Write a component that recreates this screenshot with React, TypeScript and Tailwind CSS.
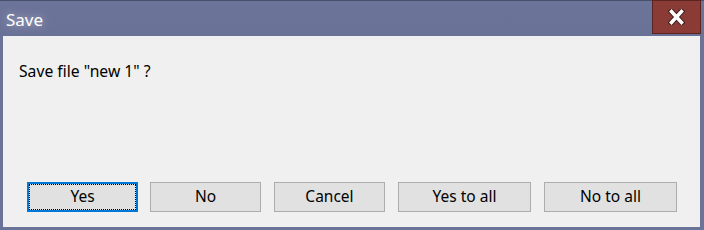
import React from "react";

const font = { fontFamily: '"Noto Sans", "Open Sans", sans-serif' };

function Btn({ label, w, focused }: { label: string; w: string; focused?: boolean }) {
  if (focused) {
    return (
      <div className={`${w} h-[30px] border-2 border-[#0078d7] bg-[#e1e1e1] flex`}>
        <div className="flex-1 border border-dotted border-black flex items-center justify-center text-[15.5px] text-black leading-none">
          {label}
        </div>
      </div>
    );
  }
  return (
    <div className={`${w} h-[30px] border border-[#adadad] bg-[#e1e1e1] flex items-center justify-center text-[15.5px] text-black leading-none`}>
      {label}
    </div>
  );
}

export default function App() {
  return (
    <div className="w-[704px] h-[230px] bg-[#6c7399] border-t border-[#4a4f6a] flex flex-col" style={font}>
      <div className="h-[35px] flex items-start bg-gradient-to-b from-[#6d7499] to-[#6a7197]">
        <div className="pl-[6px] pt-[8px] text-[17px] leading-[22px] text-white [text-shadow:0_0_8px_rgba(255,255,255,0.55)]">
          Save
        </div>
        <div className="flex-1" />
        <div className="w-[49px] h-[34px] mr-[3px] -mt-px bg-[#8a3b36] border border-[#5c2420] flex items-center justify-center">
          <svg width="17" height="16" viewBox="0 0 17 16">
            <path d="M3.5 2.5 L13.5 13.5 M13.5 2.5 L3.5 13.5" stroke="#3a1a18" strokeWidth="5.5" strokeLinecap="square" />
            <path d="M3.5 2.5 L13.5 13.5 M13.5 2.5 L3.5 13.5" stroke="#ffffff" strokeWidth="3.5" strokeLinecap="square" />
          </svg>
        </div>
      </div>
      <div className="flex-1 ml-[3px] mr-[4px] mb-[3px] bg-[#f0f0f0] flex flex-col">
        <div className="pl-[16px] pt-[25px] text-[15.7px] leading-[20px] text-black">Save file "new 1" ?</div>
        <div className="flex-1" />
        <div className="flex pl-[24px] pb-[15px]">
          <Btn label="Yes" w="w-[111px]" focused />
          <div className="ml-[12px]"><Btn label="No" w="w-[111px]" /></div>
          <div className="ml-[13px]"><Btn label="Cancel" w="w-[111px]" /></div>
          <div className="ml-[13px]"><Btn label="Yes to all" w="w-[133px]" /></div>
          <div className="ml-[13px]"><Btn label="No to all" w="w-[133px]" /></div>
        </div>
      </div>
    </div>
  );
}
